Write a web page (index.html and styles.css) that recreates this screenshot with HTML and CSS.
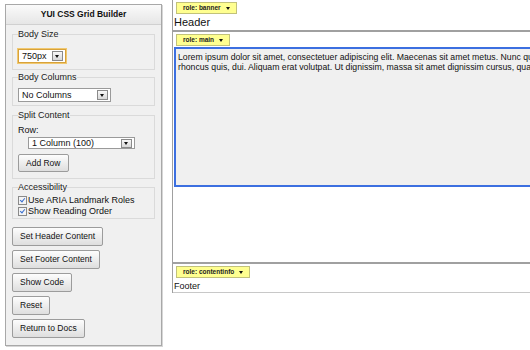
FILE: index.html
```html
<!DOCTYPE html>
<html>
<head>
<meta charset="utf-8">
<link rel="stylesheet" href="styles.css">
</head>
<body>
<div class="layout">
  <div class="panel">
    <div class="panel-head">YUI CSS Grid Builder</div>
    <div class="panel-body">
      <fieldset class="fs fs-size">
        <legend>Body Size</legend>
        <div class="select sel-size focused"><span class="sel-text">750px</span><span class="sel-btn"></span></div>
      </fieldset>
      <fieldset class="fs fs-cols">
        <legend>Body Columns</legend>
        <div class="select sel-cols"><span class="sel-text">No Columns</span><span class="sel-btn"></span></div>
      </fieldset>
      <fieldset class="fs fs-split">
        <legend>Split Content</legend>
        <div class="row-label">Row:</div>
        <div class="select sel-row"><span class="sel-text">1 Column (100)</span><span class="sel-btn"></span></div>
        <div class="btn btn-add">Add Row</div>
      </fieldset>
      <fieldset class="fs fs-acc">
        <legend>Accessibility</legend>
        <label class="check"><span class="cbox"></span>Use ARIA Landmark Roles</label>
        <label class="check"><span class="cbox"></span>Show Reading Order</label>
      </fieldset>
      <div class="buttons">
        <div class="btn">Set Header Content</div>
        <div class="btn">Set Footer Content</div>
        <div class="btn">Show Code</div>
        <div class="btn">Reset</div>
        <div class="btn">Return to Docs</div>
      </div>
    </div>
  </div>
  <div class="doc">
    <div class="sec sec-hd">
      <div class="role">role: banner <span class="caret"></span></div>
      <div class="hd-text">Header</div>
    </div>
    <div class="sec sec-bd">
      <div class="role">role: main <span class="caret"></span></div>
      <div class="main-box">
        <div class="lorem">Lorem ipsum dolor sit amet, consectetuer adipiscing elit. Maecenas sit amet metus. Nunc quam elit, posuere nec, auctor in,</div>
        <div class="lorem">rhoncus quis, dui. Aliquam erat volutpat. Ut dignissim, massa sit amet dignissim cursus, quam lacus feugiat dolor, id aliquam leo</div>
      </div>
    </div>
    <div class="sec sec-ft">
      <div class="role">role: contentinfo <span class="caret"></span></div>
      <div class="ft-text">Footer</div>
    </div>
  </div>
</div>
</body>
</html>
```
FILE: styles.css
```css
html, body {
  margin: 0;
  padding: 0;
  overflow: hidden;
  background: #fff;
}
body {
  font-family: "Liberation Sans", Arial, sans-serif;
  color: #111;
  width: 530px;
  height: 350px;
}
.layout {
  display: flex;
  align-items: flex-start;
  width: 1000px;
}
.panel {
  margin: 4px 0 0 5px;
  width: 155px;
  height: 340px;
  border: 1px solid #a8a8a8;
  box-shadow: 1px 1px 0 #d6d6d6;
  background: #f0f0f0;
  display: flex;
  flex-direction: column;
}
.panel-head {
  height: 19px;
  line-height: 19px;
  text-align: center;
  font-weight: bold;
  font-size: 8.5px;
  color: #111;
  background: linear-gradient(#fafafa, #e6e6e6);
  border-bottom: 1px solid #d0d0d0;
}
.panel-body {
  padding: 4px 6px 0 6px;
  display: flex;
  flex-direction: column;
}
.fs {
  margin: 0;
  border: 1px solid #dadada;
  padding: 6px 5px 6px 5px;
  min-width: 0;
}
.fs legend {
  font-size: 9px;
  line-height: 11px;
  padding: 0;
  color: #222;
}
.fs-size {
  padding-top: 9px;
  padding-bottom: 6px;
}
.fs-cols {
  margin-top: 2px;
  padding-top: 5px;
  padding-bottom: 3px;
}
.fs-split {
  margin-top: 4px;
  display: flex;
  flex-direction: column;
  padding-top: 4px;
  padding-bottom: 6px;
}
.fs-acc {
  margin-top: 3px;
  padding-top: 2px;
  padding-bottom: 1px;
  display: flex;
  flex-direction: column;
}
.select {
  display: flex;
  align-items: center;
  height: 12px;
  background: #fff;
  border: 1px solid #9a9a9a;
  font-size: 9px;
  color: #111;
}
.sel-text {
  flex: 1;
  padding-left: 3px;
  line-height: 12px;
}
.sel-btn {
  width: 9px;
  height: 8px;
  margin-right: 2px;
  border: 1px solid #8a8a8a;
  background: linear-gradient(#f8f8f8, #d8d8d8);
  position: relative;
}
.sel-btn::after {
  content: "";
  position: absolute;
  left: 2px;
  top: 3px;
  border-left: 2.5px solid transparent;
  border-right: 2.5px solid transparent;
  border-top: 3px solid #111;
}
.sel-size {
  width: 46px;
}
.focused {
  border: 1px solid #d8a23a;
  box-shadow: 0 0 0 1px #f0c870;
}
.sel-cols {
  width: 91px;
}
.row-label {
  font-size: 9px;
  line-height: 11px;
}
.sel-row {
  width: 105px;
  margin: 1px 0 0 10px;
  height: 10px;
}
.sel-row .sel-text { line-height: 10px; }
.sel-row .sel-btn { height: 7px; }
.sel-row .sel-btn::after { top: 2px; }
.btn {
  align-self: flex-start;
  display: inline-block;
  height: 17px;
  line-height: 17px;
  padding: 0 7px;
  font-size: 8.5px;
  color: #111;
  border: 1px solid #9c9c9c;
  border-radius: 2px;
  background: linear-gradient(#fdfdfd, #dedede);
  white-space: nowrap;
}
.btn-add {
  margin-top: 5px;
  height: 16px;
  line-height: 16px;
  padding: 0 7px;
}
.check {
  display: flex;
  align-items: center;
  font-size: 9px;
  line-height: 11px;
  color: #111;
}
.cbox {
  width: 7px;
  height: 7px;
  border: 1px solid #8a8a8a;
  background: #f4f4f4;
  margin-right: 1px;
  position: relative;
}
.cbox::after {
  content: "";
  position: absolute;
  left: 2px;
  top: 0px;
  width: 2px;
  height: 4px;
  border-right: 1.5px solid #3a6fd0;
  border-bottom: 1.5px solid #3a6fd0;
  transform: rotate(40deg);
}
.buttons {
  display: flex;
  flex-direction: column;
  gap: 4px;
  margin-top: 8px;
}
.doc {
  margin-left: 10px;
  width: 800px;
  border-left: 1px solid #a0a0a0;
}
.sec {
  padding: 2px 0 0 3px;
  box-sizing: border-box;
  display: flex;
  flex-direction: column;
  align-items: flex-start;
}
.role {
  display: flex;
  align-items: center;
  gap: 5px;
  height: 10px;
  padding: 0 6px;
  background: #ffff90;
  border: 1px solid #c2c27a;
  font-weight: bold;
  font-size: 6.5px;
  color: #222;
  line-height: 10px;
}
.caret {
  display: inline-block;
  border-left: 2.5px solid transparent;
  border-right: 2.5px solid transparent;
  border-top: 3px solid #111;
}
.sec-hd {
  height: 32px;
  border-bottom: 2px solid #a0a0a0;
}
.hd-text {
  font-size: 11px;
  line-height: 13px;
  margin-left: -2px;
  margin-top: 2px;
}
.sec-bd {
  height: 232px;
  border-bottom: 2px solid #a0a0a0;
}
.main-box {
  align-self: stretch;
  margin: 1px 0 0 -2px;
  height: 133px;
  border: 2px solid #3c6fe0;
  border-right: none;
  background: #f0f0f0;
  padding: 3px 0 0 2px;
}
.lorem {
  font-size: 8.7px;
  line-height: 10px;
  white-space: nowrap;
  color: #111;
}
.sec-ft {
  height: 29px;
  border-bottom: 1px solid #c8c8c8;
}
.ft-text {
  font-size: 9px;
  line-height: 11px;
  margin-left: -2px;
  margin-top: 3px;
}
```
